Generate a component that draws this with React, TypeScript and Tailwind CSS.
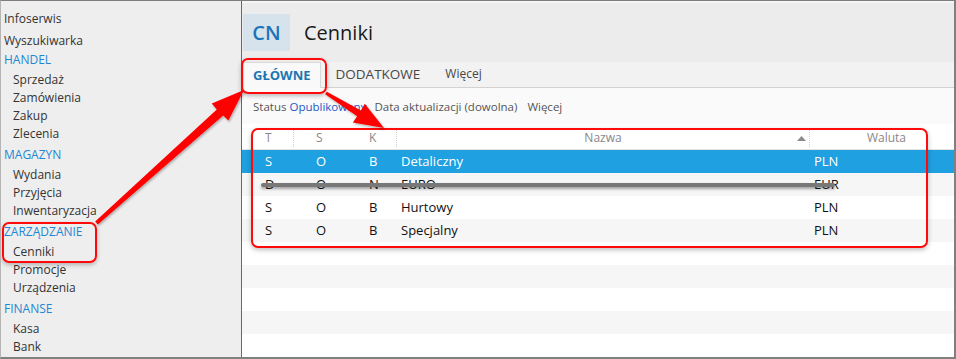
import React from 'react';

type NavItem = { label: string; kind: 'top' | 'head' | 'sub'; cls?: string };

const nav: NavItem[] = [
  { label: 'Infoserwis', kind: 'top' },
  { label: 'Wyszukiwarka', kind: 'top', cls: 'mt-[4px]' },
  { label: 'HANDEL', kind: 'head', cls: 'mt-[1px] mb-[2px]' },
  { label: 'Sprzedaż', kind: 'sub' },
  { label: 'Zamówienia', kind: 'sub' },
  { label: 'Zakup', kind: 'sub' },
  { label: 'Zlecenia', kind: 'sub' },
  { label: 'MAGAZYN', kind: 'head', cls: 'mt-[3px] mb-[2px]' },
  { label: 'Wydania', kind: 'sub' },
  { label: 'Przyjęcia', kind: 'sub' },
  { label: 'Inwentaryzacja', kind: 'sub' },
  { label: 'ZARZĄDZANIE', kind: 'head', cls: 'mt-[3px] mb-[2px]' },
  { label: 'Cenniki', kind: 'sub' },
  { label: 'Promocje', kind: 'sub' },
  { label: 'Urządzenia', kind: 'sub' },
  { label: 'FINANSE', kind: 'head', cls: 'mt-[3px] mb-[2px]' },
  { label: 'Kasa', kind: 'sub' },
  { label: 'Bank', kind: 'sub' },
];

const rows = [
  { t: 'S', s: 'O', k: 'B', name: 'Detaliczny', cur: 'PLN' },
  { t: 'D', s: 'O', k: 'N', name: 'EURO', cur: 'EUR' },
  { t: 'S', s: 'O', k: 'B', name: 'Hurtowy', cur: 'PLN' },
  { t: 'S', s: 'O', k: 'B', name: 'Specjalny', cur: 'PLN' },
  null,
  null,
  null,
  null,
  null,
];

function Sidebar() {
  return (
    <aside className="w-[241px] shrink-0 bg-[#eeeeee] border-r border-[#2a78b8] pt-[9px]">
      {nav.map((n) => (
        <div
          key={n.label}
          className={`h-[18px] leading-[18px] text-[12px] whitespace-nowrap ${
            n.kind === 'sub' ? 'pl-[12px] text-[#333333]' : n.kind === 'head' ? 'pl-[3px] text-[#1f86d4]' : 'pl-[3px] text-[#333333]'
          } ${n.cls ?? ''}`}
        >
          {n.label}
        </div>
      ))}
    </aside>
  );
}

function Table() {
  return (
    <div className="flex flex-col bg-white">
      <div className="flex h-[26px] pt-[2px] border-b border-[#e3e3e3] text-[12px] text-[#888888] items-stretch">
        <div className="w-[51px] pl-[23px] flex items-center">T</div>
        <div className="w-[52px] pl-[22px] flex items-center border-l border-dotted border-[#cfcfcf] my-[2px]">S</div>
        <div className="w-[51px] pl-[24px] flex items-center">K</div>
        <div className="relative w-[413px] flex items-center justify-center border-l border-dotted border-[#cfcfcf] my-[2px]">
          Nazwa
          <svg className="absolute right-[3px] top-[8px]" width="9" height="5" viewBox="0 0 9 5">
            <path d="M0 5 L4.5 0 L9 5 Z" fill="#8a8a8a" />
          </svg>
        </div>
        <div className="flex-1 flex items-center justify-end pr-[48px] border-l border-dotted border-[#cfcfcf] my-[2px]">Waluta</div>
      </div>
      {rows.map((r, i) => (
        <div
          key={i}
          className={`relative flex h-[23px] items-center text-[13px] ${
            i === 0 ? 'bg-[#1fa0e1] text-white' : i % 2 === 1 ? 'bg-[#f6f6f6] text-[#111111]' : 'bg-white text-[#111111]'
          }`}
        >
          {r && (
            <>
              <div className="w-[51px] pl-[23px]">{r.t}</div>
              <div className="w-[52px] pl-[23px]">{r.s}</div>
              <div className="w-[51px] pl-[24px]">{r.k}</div>
              <div className="w-[413px] pl-[5px]">{r.name}</div>
              <div className="flex-1 pl-[5px]">{r.cur}</div>
            </>
          )}
          {i === 1 && (
            <div className="absolute left-[19px] top-[10px] w-[574px] h-[4px] rounded-full bg-[#787878] shadow-[0_2px_3px_rgba(0,0,0,0.35)]" />
          )}
        </div>
      ))}
    </div>
  );
}

function Annotations() {
  return (
    <>
      <div className="absolute left-[240px] top-[57px] w-[86px] h-[36px] rounded-[7px] border-2 border-[#ff0a0a] shadow-[0_2px_4px_rgba(0,0,0,0.25)]" />
      <div className="absolute left-[1px] top-[221px] w-[95px] h-[41px] rounded-[7px] border-2 border-[#ff0a0a] shadow-[0_2px_4px_rgba(0,0,0,0.25)]" />
      <div className="absolute left-[250px] top-[127px] w-[677px] h-[120px] rounded-[7px] border-2 border-[#ff0a0a] shadow-[0_2px_5px_rgba(0,0,0,0.25)]" />
      <svg className="absolute left-0 top-0 pointer-events-none" width="956" height="359" viewBox="0 0 956 359">
        <defs>
          <filter id="sh" x="-10%" y="-10%" width="130%" height="130%">
            <feDropShadow dx="1" dy="1.5" stdDeviation="1.2" floodColor="#000" floodOpacity="0.3" />
          </filter>
        </defs>
        <polygon
          filter="url(#sh)"
          fill="#ff0000"
          points="94.2,220.4 215.8,108.6 210.8,102.6 243,89 227.4,119.6 222.2,114.6 96.8,223.4"
        />
        <polygon
          filter="url(#sh)"
          fill="#ff0000"
          points="325.8,90.7 359.9,109.5 363.8,102.8 383,127 351.9,121.6 356.1,115.3 324.2,93.3"
        />
      </svg>
    </>
  );
}

export default function App() {
  return (
    <div className="relative w-[956px] h-[359px] overflow-hidden flex bg-white border-t border-[#7d7d7d] border-l border-l-[#b5b5b5] border-r-2 border-r-[#808080] border-b-2 border-b-[#808080] font-['Open_Sans',sans-serif]">
      <Sidebar />
      <main className="flex-1 flex flex-col min-w-0">
        <header className="h-[61px] bg-[#ececec] border-t-2 border-[#f5f5f5] flex items-start">
          <div className="ml-[1px] mt-[11px] w-[47px] h-[37px] bg-[#d6e2ec] flex items-center justify-center text-[20px] font-semibold text-[#1b74ba]">
            CN
          </div>
          <div className="ml-[14px] mt-[11px] h-[37px] flex items-center text-[20px] text-[#1a1a1a]">Cenniki</div>
        </header>
        <nav className="h-[27px] bg-[#f2f2f2] border-b border-[#d2d2d2] flex items-stretch">
          <div className="ml-[1px] px-[9px] -mb-px flex items-center bg-[#f9f9f9] border-x border-t border-[#d8d8d8] text-[13px] font-bold text-[#1c76b2]">
            GŁÓWNE
          </div>
          <div className="ml-[15px] flex items-center text-[13.5px] text-[#474747]">DODATKOWE</div>
          <div className="ml-[25px] flex items-center text-[12px] text-[#474747]">Więcej</div>
        </nav>
        <div className="h-[36px] bg-[#fafafa] flex items-center pl-[11px] text-[11.5px] text-[#555555] whitespace-nowrap">
          <span>Status</span>
          <span className="ml-[3px] text-[#2457c5]">Opublikowany</span>
          <span className="ml-[8px]">Data aktualizacji (dowolna)</span>
          <span className="ml-[10px]">Więcej</span>
        </div>
        <Table />
      </main>
      <Annotations />
    </div>
  );
}
